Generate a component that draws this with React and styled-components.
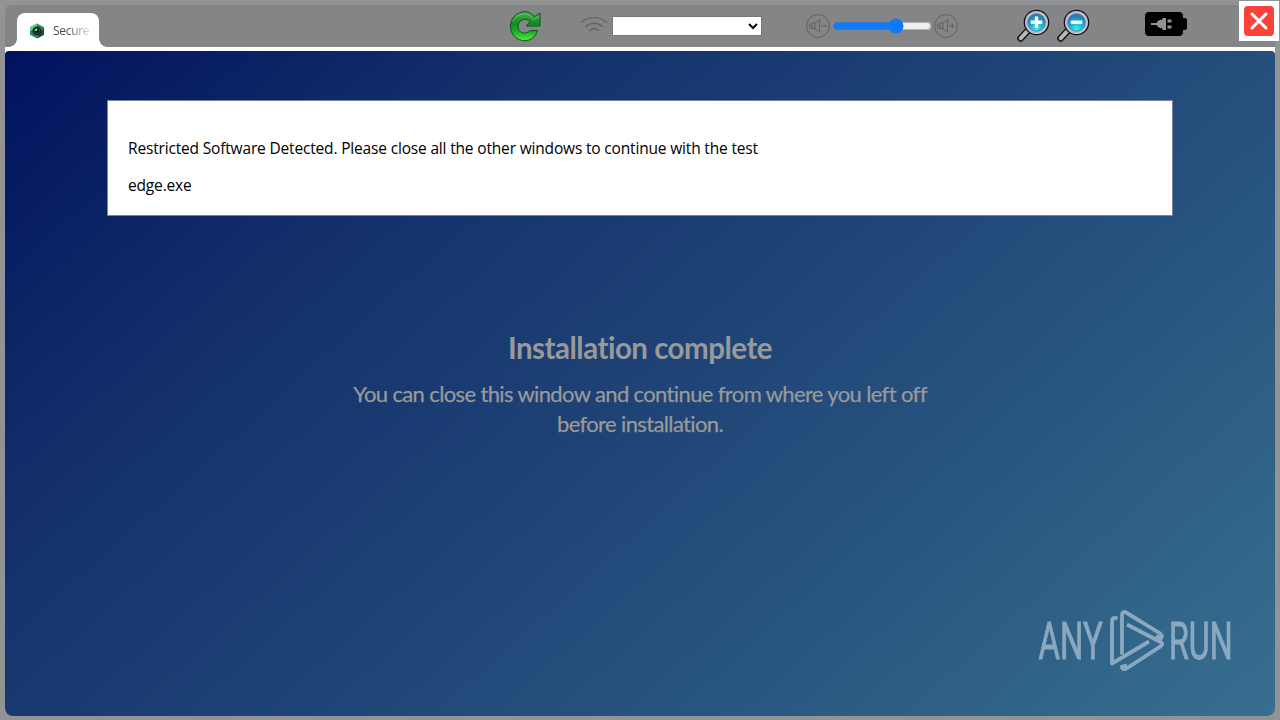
import React from "react";
import styled, { createGlobalStyle } from "styled-components";

const GlobalStyle = createGlobalStyle`
  * {
    box-sizing: border-box;
  }

  body {
    margin: 0;
    overflow: hidden;
  }
`;

const Window = styled.div`
  width: 1280px;
  height: 720px;
  padding: 5px 5px 4px;
  background: #929395;
  display: flex;
  flex-direction: column;
  font-family: "Open Sans", "Noto Sans", sans-serif;
`;

const Toolbar = styled.header`
  height: 42px;
  flex: none;
  display: flex;
  align-items: flex-start;
  background: #838587;
  border-top-left-radius: 6px;
`;

const Tab = styled.div`
  position: relative;
  width: 82px;
  height: 34px;
  margin: 8px 0 0 12px;
  padding: 1px 10px 0 12px;
  display: flex;
  align-items: center;
  gap: 8px;
  background: #fff;
  border-radius: 8px 8px 0 0;

  &::before,
  &::after {
    content: "";
    position: absolute;
    bottom: 0;
    width: 8px;
    height: 8px;
  }

  &::before {
    left: -8px;
    background: radial-gradient(circle at 0 0, transparent 7.5px, #fff 8px);
  }

  &::after {
    right: -8px;
    background: radial-gradient(circle at 100% 0, transparent 7.5px, #fff 8px);
  }
`;

const TabTitle = styled.span`
  width: 36px;
  overflow: hidden;
  white-space: nowrap;
  font-size: 12px;
  line-height: 18px;
  letter-spacing: -0.3px;
  color: #45474a;
  mask-image: linear-gradient(to right, #000 35%, rgba(0, 0, 0, 0.2) 100%);
`;

const Icon = styled.svg`
  display: block;
  flex: none;
`;

const Tool = styled.div`
  display: flex;
  align-items: center;
  gap: ${(props) => props.$gap || 0}px;
  margin-left: ${(props) => props.$left}px;
  margin-top: ${(props) => props.$top}px;
`;

const NetworkSelect = styled.select`
  width: 150px;
  height: 20px;
  margin: 0;
  padding: 0;
  background-color: #fff;
  border: 1px solid #767676;
  border-radius: 0;
`;

const Volume = styled.input`
  width: 100px;
  height: 16px;
  margin: 0 -1px 0 -1px;
  accent-color: #0a7aff;
`;

const CloseButton = styled.button`
  width: 40px;
  height: 40px;
  margin: -4px -4px 0 auto;
  padding: 0;
  display: flex;
  align-items: center;
  justify-content: center;
  background: #fff;
  border: none;
`;

const Page = styled.main`
  flex: 1;
  padding: 49px 102px 0;
  border-radius: 4px 4px 8px 8px;
  background: linear-gradient(138deg, #01125f 0%, #132f6a 25%, #1f4477 52%, #376f8f 100%);
`;

const PageFrame = styled.div`
  flex: 1;
  display: flex;
  padding-top: 4px;
  background: linear-gradient(#fff 0 8px, transparent 8px);
`;

const Notice = styled.section`
  width: 1066px;
  height: 116px;
  padding: 35px 20px 0;
  background: #fff;
  border: 1px solid #77849f;
`;

const NoticeText = styled.p`
  margin: 0 0 13px;
  font-size: 15.5px;
  line-height: 24px;
  letter-spacing: -0.17px;
  color: #000;
`;

const Message = styled.section`
  margin-top: 112px;
  text-align: center;
  font-family: Lato, sans-serif;
  font-variant-ligatures: none;
  color: #999;
`;

const Heading = styled.h1`
  margin: 0;
  font-size: 29.5px;
  line-height: 40px;
  font-weight: 700;
  letter-spacing: -0.5px;
`;

const Description = styled.p`
  width: 600px;
  margin: 11px auto 0;
  font-size: 22px;
  line-height: 30px;
  letter-spacing: -0.63px;
  -webkit-text-stroke: 0.25px #999;
`;

const Watermark = styled.svg`
  position: absolute;
  left: 1030px;
  top: 600px;
  opacity: 0.75;
`;

function Favicon() {
  return (
    <Icon width="16" height="16" viewBox="0 0 16 16">
      <path d="M8 .5 15 4.3v7.4L8 15.5 1 11.7V4.3Z" fill="#2b8f58" />
      <path d="M8 .5 1 4.3v4L8 4Z" fill="#54d486" />
      <path d="m15 4.3v7.4L8 15.5Z" fill="#174f37" />
      <circle cx="8" cy="8" r="4.6" fill="#142a22" />
      <circle cx="8" cy="8" r="2.6" fill="#050807" stroke="#5a8270" strokeWidth=".6" />
      <circle cx="7.2" cy="7" r="1.1" fill="#e9fff4" />
    </Icon>
  );
}

function ReloadIcon() {
  return (
    <Icon width="34" height="34" viewBox="0 0 34 34">
      <defs>
        <linearGradient id="reload" x1="0" y1="0" x2="0" y2="1">
          <stop offset="0" stopColor="#4fae50" />
          <stop offset=".4" stopColor="#128a20" />
          <stop offset=".65" stopColor="#16a724" />
          <stop offset="1" stopColor="#55ee3c" />
        </linearGradient>
      </defs>
      <path
        d="M26.4 7.6 32 4v13H18.2l4-4.4C19 9.5 14 9.8 11.5 13 8.5 17 10.5 23.5 15.5 24c3 .2 5-.6 6.5-2.4h7.5C27.7 28 22.6 31.7 16.8 31.7 8.8 31.7 2.4 25.2 2.4 17.2 2.4 9.2 8.8 2.7 16.8 2.7c3.9 0 7.2 1.8 9.6 4.9Z"
        fill="url(#reload)"
        stroke="#075013"
        strokeWidth=".9"
        strokeLinejoin="round"
      />
      <path d="M5 12.5C8.6 4 18.6 2.4 24.6 9l1.6 1.4 4.8-2.7" fill="none" stroke="#a9dfaa" strokeWidth="1" opacity=".45" />
    </Icon>
  );
}

function WifiIcon() {
  return (
    <Icon width="28" height="20" viewBox="0 0 28 20" fill="none" stroke="#626466" strokeWidth="1.4" strokeLinecap="round">
      <path d="M1.5 6.2c7.2-6.1 17.8-6.1 25 0" />
      <path d="M5.8 10.4c4.8-4.2 11.6-4.2 16.4 0" />
      <path d="M9.8 14.5c2.5-2.3 5.9-2.3 8.4 0" />
    </Icon>
  );
}

function SpeakerIcon({ plus }) {
  return (
    <Icon width="24" height="24" viewBox="0 0 24 24" fill="none" stroke="#5b5d5f" strokeWidth=".9">
      <circle cx="12" cy="12" r="11.4" />
      <path d="M5.8 8.9H9v6H5.8ZM9 9.2l4.6-3.5v12.6L9 14.9M3.8 9.5v5" />
      <path d={plus ? "M15.8 11.8h5M18.3 9.3v5" : "M15.5 11.8h5.3"} />
    </Icon>
  );
}

function ZoomIcon({ id, plus }) {
  return (
    <Icon width="34" height="34" viewBox="0 0 34 34">
      <defs>
        <radialGradient id={id} cx=".5" cy=".85" r=".8">
          <stop offset="0" stopColor="#35f1ef" />
          <stop offset=".5" stopColor="#16add0" />
          <stop offset="1" stopColor="#2377ad" />
        </radialGradient>
      </defs>
      <path d="m12.7 20.7-8 8.6" stroke="#111" strokeWidth="6.8" strokeLinecap="round" />
      <path d="m12.5 20.9-7.7 8.3" stroke="#b6b8b8" strokeWidth="4" strokeLinecap="round" />
      <circle cx="20.5" cy="13.5" r="12.8" fill="#111" />
      <circle cx="20.5" cy="13.5" r="11.5" fill="#bcc1d2" />
      <circle cx="20.5" cy="13.5" r="8.8" fill={`url(#${id})`} stroke="#53739a" strokeWidth=".8" />
      <path d={plus ? "M14.7 13.2h11.6M20.5 7.4V19" : "M14.7 13.2h11.6"} stroke="#fff" strokeWidth="3.4" />
    </Icon>
  );
}

function BatteryIcon() {
  return (
    <Icon width="43" height="25" viewBox="0 0 43 25">
      <path d="M4 0h30a4 4 0 0 1 4 4v2h2a2 2 0 0 1 2 2v8a2 2 0 0 1-2 2h-2v2a4 4 0 0 1-4 4H4a4 4 0 0 1-4-4V4a4 4 0 0 1 4-4Z" fill="#000" />
      <path d="M6 11h5.5c1.3-2.5 3.5-3.3 6-3.4V6H21v12h-3.5v-1.6c-2.5-.1-4.7-.9-6-3.4H6Z" fill="#929292" />
      <path d="M22.5 7.5h4v3h-4ZM22.5 13.5h4v3h-4Z" fill="#929292" />
    </Icon>
  );
}

function AnyRunLogo() {
  return (
    <Watermark width="210" height="80" viewBox="0 0 210 80">
      <g fill="#a8bfd2" stroke="#a8bfd2" strokeWidth=".9" fontFamily="Roboto, sans-serif" fontSize="51">
        <text transform="translate(8.5 59) scale(.63 1)" textLength="102" lengthAdjust="spacingAndGlyphs">ANY</text>
        <text transform="translate(139 59) scale(.63 1)" textLength="101" lengthAdjust="spacingAndGlyphs">RUN</text>
      </g>
      <g fill="none" stroke="#a8bfd2" strokeWidth="3.8" strokeLinejoin="round">
        <path d="M87.5 18.5c-3.5-1.5-5.5-.5-5.5 3.5v41.5l37-22" />
        <path d="M92 54.5V15c0-3 1.8-3.8 4-2.5L129.5 33c2.5 1.5 3 3.5 1.5 5.5l-5-2.5" />
        <path d="M97 24.5 130.5 42c2.3 1.3 2.3 3 0 4.3l-34 22.2c-3 1.5-4.7.5-4.5-2l5-1" />
      </g>
    </Watermark>
  );
}

function App() {
  return (
    <Window>
      <GlobalStyle />
      <Toolbar>
        <Tab>
          <Favicon />
          <TabTitle>Secure</TabTitle>
        </Tab>
        <Tool $left={409} $top={4}>
          <ReloadIcon />
        </Tool>
        <Tool $left={38} $top={11} $gap={4}>
          <WifiIcon />
          <NetworkSelect />
        </Tool>
        <Tool $left={44} $top={9} $gap={3}>
          <SpeakerIcon />
          <Volume type="range" min="0" max="100" defaultValue="67" />
          <SpeakerIcon plus />
        </Tool>
        <Tool $left={58} $top={4} $gap={6}>
          <ZoomIcon id="lens-in" plus />
          <ZoomIcon id="lens-out" />
        </Tool>
        <Tool $left={55} $top={7}>
          <BatteryIcon />
        </Tool>
        <CloseButton>
          <Icon width="30" height="30" viewBox="0 0 30 30">
            <rect width="30" height="30" rx="4" fill="#f8423a" />
            <path d="m8 8 14 14M22 8 8 22" stroke="#fff" strokeWidth="3" strokeLinecap="round" />
          </Icon>
        </CloseButton>
      </Toolbar>
      <PageFrame>
        <Page>
          <Notice>
            <NoticeText>
              Restricted Software Detected. Please close all the other windows to continue with the test
            </NoticeText>
            <NoticeText>edge.exe</NoticeText>
          </Notice>
          <Message>
            <Heading>Installation complete</Heading>
            <Description>
              You can close this window and continue from where you left off before installation.
            </Description>
          </Message>
        </Page>
      </PageFrame>
      <AnyRunLogo />
    </Window>
  );
}

export default App;
